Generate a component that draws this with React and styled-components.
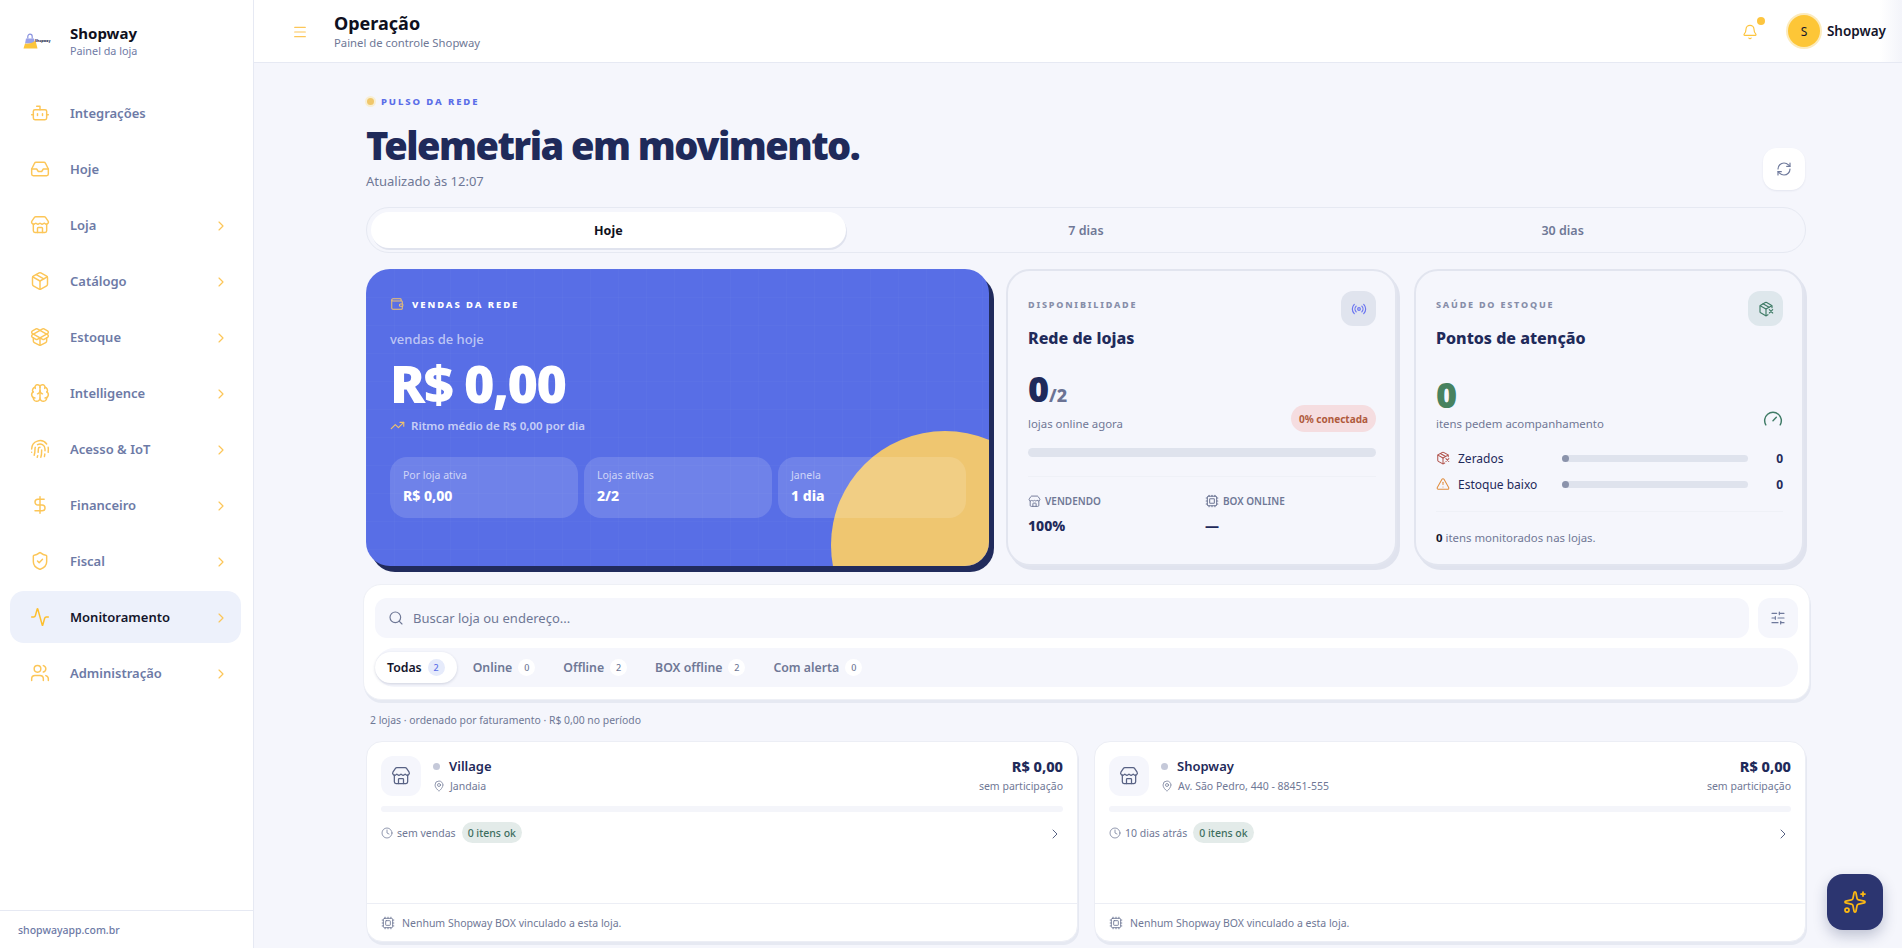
import styled, { createGlobalStyle } from "styled-components";
import {
  Activity,
  Bell,
  Bot,
  Brain,
  ChevronRight,
  Clock,
  Cpu,
  DollarSign,
  Fingerprint,
  Gauge,
  Inbox,
  MapPin,
  Menu,
  Package,
  PackageOpen,
  PackageX,
  Radio,
  RefreshCw,
  Search,
  ShieldCheck,
  SlidersHorizontal,
  Sparkles,
  Store,
  TrendingUp,
  TriangleAlert,
  Users,
  Wallet,
} from "lucide-react";

const NAV = [
  { label: "Integrações", icon: Bot },
  { label: "Hoje", icon: Inbox },
  { label: "Loja", icon: Store, more: true },
  { label: "Catálogo", icon: Package, more: true },
  { label: "Estoque", icon: PackageOpen, more: true },
  { label: "Intelligence", icon: Brain, more: true },
  { label: "Acesso & IoT", icon: Fingerprint, more: true },
  { label: "Financeiro", icon: DollarSign, more: true },
  { label: "Fiscal", icon: ShieldCheck, more: true },
  { label: "Monitoramento", icon: Activity, more: true, active: true },
  { label: "Administração", icon: Users, more: true },
];

const FILTERS = [
  { label: "Todas", count: 2, active: true },
  { label: "Online", count: 0 },
  { label: "Offline", count: 2 },
  { label: "BOX offline", count: 2 },
  { label: "Com alerta", count: 0 },
];

const STORES = [
  { name: "Village", place: "Jandaia", last: "sem vendas" },
  { name: "Shopway", place: "Av. São Pedro, 440 - 88451-555", last: "10 dias atrás" },
];

const Logo = () => (
  <svg width="30" height="18" viewBox="0 0 30 18">
    <path d="M3 6.5h8l1 5H2z" fill="#9aa2e8" />
    <path d="M4.8 6.5V4.4a2.2 2.2 0 0 1 4.4 0v2.1" fill="none" stroke="#8a93df" strokeWidth="1.2" />
    <path d="M0.5 16.5 2 11.5c3 .6 7-.2 10.5-3l2 8z" fill="#fcc53a" />
    <text x="12" y="10" fontFamily="'Noto Sans', sans-serif" fontSize="3.4" fontWeight="800" fill="#20264d">
      Shopway
    </text>
  </svg>
);

const App = () => {
  return (
    <Shell>
      <GlobalStyle />
      <Sidebar>
        <Brand>
          <BrandLogo>
            <Logo />
          </BrandLogo>
          <div>
            <BrandName>Shopway</BrandName>
            <BrandSub>Painel da loja</BrandSub>
          </div>
        </Brand>
        <Nav>
          {NAV.map((item) => (
            <NavItem key={item.label} $active={item.active}>
              <NavIcon $active={item.active}>
                <item.icon size={20} strokeWidth={1.75} />
              </NavIcon>
              <NavLabel>{item.label}</NavLabel>
              {item.more && (
                <NavArrow>
                  <ChevronRight size={16} strokeWidth={1.75} />
                </NavArrow>
              )}
            </NavItem>
          ))}
        </Nav>
        <SideFoot>shopwayapp.com.br</SideFoot>
      </Sidebar>

      <Main>
        <Topbar>
          <MenuButton>
            <Menu size={16} strokeWidth={1.75} />
          </MenuButton>
          <TopTitles>
            <TopTitle>Operação</TopTitle>
            <TopSub>Painel de controle Shopway</TopSub>
          </TopTitles>
          <BellWrap>
            <Bell size={16} strokeWidth={1.75} />
            <BellDot />
          </BellWrap>
          <Avatar>S</Avatar>
          <UserName>Shopway</UserName>
        </Topbar>

        <Content>
          <Eyebrow>
            <PulseDot />
            PULSO DA REDE
          </Eyebrow>
          <HeadRow>
            <div>
              <Headline>Telemetria em movimento.</Headline>
              <Updated>Atualizado às 12:07</Updated>
            </div>
            <RefreshButton>
              <RefreshCw size={16} strokeWidth={1.75} />
            </RefreshButton>
          </HeadRow>

          <Period>
            <PeriodTab $active>Hoje</PeriodTab>
            <PeriodTab>7 dias</PeriodTab>
            <PeriodTab>30 dias</PeriodTab>
          </Period>

          <Hero>
            <SalesCard>
              <SalesCircle />
              <SalesTag>
                <Wallet size={14} strokeWidth={1.75} color="#f1c36c" />
                VENDAS DA REDE
              </SalesTag>
              <SalesCaption>vendas de hoje</SalesCaption>
              <SalesValue>R$ 0,00</SalesValue>
              <SalesPace>
                <TrendingUp size={15} strokeWidth={1.75} color="#f1c36c" />
                Ritmo médio de R$ 0,00 por dia
              </SalesPace>
              <SalesStats>
                <SalesStat>
                  <StatLabel>Por loja ativa</StatLabel>
                  <StatValue>R$ 0,00</StatValue>
                </SalesStat>
                <SalesStat>
                  <StatLabel>Lojas ativas</StatLabel>
                  <StatValue>2/2</StatValue>
                </SalesStat>
                <SalesStat>
                  <StatLabel>Janela</StatLabel>
                  <StatValue>1 dia</StatValue>
                </SalesStat>
              </SalesStats>
            </SalesCard>

            <InfoCard>
              <CardHead>
                <div>
                  <CardTag>DISPONIBILIDADE</CardTag>
                  <CardTitle>Rede de lojas</CardTitle>
                </div>
                <CardIcon $bg="#e0e4ee" $color="#6a74f0">
                  <Radio size={16} strokeWidth={1.75} />
                </CardIcon>
              </CardHead>
              <BigRow>
                <div>
                  <BigNumber>
                    0<BigTotal>/2</BigTotal>
                  </BigNumber>
                  <BigCaption>lojas online agora</BigCaption>
                </div>
                <Badge>0% conectada</Badge>
              </BigRow>
              <Track />
              <Divider $top={19} />
              <Pair>
                <div>
                  <PairLabel>
                    <Store size={13} strokeWidth={1.75} />
                    VENDENDO
                  </PairLabel>
                  <PairValue>100%</PairValue>
                </div>
                <div>
                  <PairLabel>
                    <Cpu size={14} strokeWidth={1.75} />
                    BOX ONLINE
                  </PairLabel>
                  <PairValue>—</PairValue>
                </div>
              </Pair>
            </InfoCard>

            <InfoCard>
              <CardHead>
                <div>
                  <CardTag>SAÚDE DO ESTOQUE</CardTag>
                  <CardTitle>Pontos de atenção</CardTitle>
                </div>
                <CardIcon $bg="#dee7ec" $color="#3f7b66">
                  <PackageX size={16} strokeWidth={1.75} />
                </CardIcon>
              </CardHead>
              <BigRow>
                <div>
                  <BigNumber $green>0</BigNumber>
                  <BigCaption>itens pedem acompanhamento</BigCaption>
                </div>
                <GaugeMark>
                  <Gauge size={20} strokeWidth={1.75} />
                </GaugeMark>
              </BigRow>
              <Levels>
                <Level>
                  <LevelName>
                    <PackageX size={14} strokeWidth={1.75} color="#b0524a" />
                    Zerados
                  </LevelName>
                  <LevelTrack>
                    <LevelDot />
                  </LevelTrack>
                  <LevelCount>0</LevelCount>
                </Level>
                <Level>
                  <LevelName>
                    <TriangleAlert size={14} strokeWidth={1.75} color="#e08d3c" />
                    Estoque baixo
                  </LevelName>
                  <LevelTrack>
                    <LevelDot />
                  </LevelTrack>
                  <LevelCount>0</LevelCount>
                </Level>
              </Levels>
              <Divider $top={18} />
              <Monitored>
                <strong>0</strong> itens monitorados nas lojas.
              </Monitored>
            </InfoCard>
          </Hero>

          <FilterPanel>
            <SearchRow>
              <SearchBox>
                <Search size={16} strokeWidth={1.75} />
                Buscar loja ou endereço...
              </SearchBox>
              <FilterButton>
                <SlidersHorizontal size={16} strokeWidth={1.75} />
              </FilterButton>
            </SearchRow>
            <Pills>
              {FILTERS.map((f) => (
                <Pill key={f.label} $active={f.active}>
                  {f.label}
                  <PillCount $active={f.active}>{f.count}</PillCount>
                </Pill>
              ))}
            </Pills>
          </FilterPanel>

          <ListInfo>2 lojas · ordenado por faturamento · R$ 0,00 no período</ListInfo>

          <StoreGrid>
            {STORES.map((s) => (
              <StoreCard key={s.name}>
                <StoreBody>
                  <StoreTop>
                    <StoreIcon>
                      <Store size={20} strokeWidth={1.5} />
                    </StoreIcon>
                    <StoreInfo>
                      <StoreName>
                        <StoreDot />
                        {s.name}
                      </StoreName>
                      <StorePlace>
                        <MapPin size={12} strokeWidth={1.5} />
                        {s.place}
                      </StorePlace>
                    </StoreInfo>
                    <StoreMoney>
                      <MoneyValue>R$ 0,00</MoneyValue>
                      <MoneyShare>sem participação</MoneyShare>
                    </StoreMoney>
                  </StoreTop>
                  <StoreTrack />
                  <StoreMeta>
                    <StoreLast>
                      <Clock size={12} strokeWidth={1.5} />
                      {s.last}
                    </StoreLast>
                    <OkPill>0 itens ok</OkPill>
                    <StoreArrow>
                      <ChevronRight size={16} strokeWidth={1.5} />
                    </StoreArrow>
                  </StoreMeta>
                </StoreBody>
                <StoreFoot>
                  <Cpu size={14} strokeWidth={1.5} />
                  Nenhum Shopway BOX vinculado a esta loja.
                </StoreFoot>
              </StoreCard>
            ))}
          </StoreGrid>
        </Content>
      </Main>

      <Fab>
        <Sparkles size={24} strokeWidth={1.75} />
      </Fab>
    </Shell>
  );
};

export default App;

const GlobalStyle = createGlobalStyle`
  * { box-sizing: border-box; }
  html, body { margin: 0; height: 100%; overflow: hidden; }
  body {
    font-family: "Noto Sans", Inter, sans-serif;
    background: #f5f6fc;
    color: #1f2a5a;
  }
  strong { font-weight: 700; }
`;

const Shell = styled.div`
  display: flex;
  height: 948px;
  overflow: hidden;
`;

const Sidebar = styled.aside`
  width: 254px;
  flex: none;
  display: flex;
  flex-direction: column;
  background: #fff;
  border-right: 1px solid #e6e9f3;
`;
const Brand = styled.div`
  height: 81px;
  flex: none;
  display: flex;
  align-items: center;
  gap: 17px;
  padding: 0 0 0 23px;
`;
const BrandLogo = styled.div`
  width: 30px;
  height: 18px;
`;
const BrandName = styled.div`
  font-size: 15px;
  line-height: 20px;
  font-weight: 700;
  color: #0f1020;
`;
const BrandSub = styled.div`
  font-size: 10.8px;
  line-height: 16px;
  color: #6f7ba6;
`;
const Nav = styled.nav`
  flex: 1;
  display: flex;
  flex-direction: column;
  gap: 4px;
  padding: 6px 12px 0 10px;
`;
const NavItem = styled.div`
  height: 52px;
  display: flex;
  align-items: center;
  padding: 0 12px 0 20px;
  border-radius: 14px;
  background: ${(p) => (p.$active ? "#edf1fb" : "transparent")};
  color: ${(p) => (p.$active ? "#14152b" : "#6d7aa6")};
`;
const NavIcon = styled.span`
  width: 20px;
  height: 20px;
  margin-right: 20px;
  color: ${(p) => (p.$active ? "#fdbf2d" : "#fcc658")};
`;
const NavLabel = styled.span`
  flex: 1;
  font-size: 13px;
  font-weight: 600;
`;
const NavArrow = styled.span`
  height: 16px;
  color: #fcc658;
`;
const SideFoot = styled.div`
  height: 38px;
  flex: none;
  display: flex;
  align-items: center;
  padding-left: 18px;
  border-top: 1px solid #e6e9f3;
  font-size: 10.5px;
  font-weight: 500;
  color: #6d7aa6;
`;

const Main = styled.main`
  flex: 1;
  min-width: 0;
  display: flex;
  flex-direction: column;
`;
const Topbar = styled.header`
  height: 63px;
  flex: none;
  display: flex;
  align-items: center;
  padding: 0 16px 0 38px;
  background: linear-gradient(90deg, #fff calc(100% - 22px), #f3f4fa);
  border-bottom: 1px solid #e6e9f3;
`;
const MenuButton = styled.span`
  height: 16px;
  margin-right: 26px;
  color: #fcc658;
`;
const TopTitles = styled.div`
  flex: 1;
`;
const TopTitle = styled.div`
  font-size: 18px;
  line-height: 24px;
  font-weight: 700;
  color: #0f1020;
`;
const TopSub = styled.div`
  font-size: 11.3px;
  line-height: 16px;
  color: #6f7896;
`;
const BellWrap = styled.span`
  position: relative;
  height: 16px;
  margin-right: 30px;
  color: #fdc53f;
`;
const BellDot = styled.span`
  position: absolute;
  top: -6px;
  right: -7px;
  width: 8px;
  height: 8px;
  border-radius: 50%;
  background: #fdc53f;
`;
const Avatar = styled.span`
  width: 32px;
  height: 32px;
  display: flex;
  align-items: center;
  justify-content: center;
  margin-right: 7px;
  border-radius: 50%;
  background: #fdc637;
  box-shadow: 0 0 0 2px #fcebbd;
  font-size: 12px;
  color: #14152b;
`;
const UserName = styled.span`
  font-size: 13.5px;
  font-weight: 600;
  color: #14152b;
`;

const Content = styled.div`
  padding: 30px 96px 0 112px;
`;
const Eyebrow = styled.div`
  display: flex;
  align-items: center;
  gap: 7px;
  height: 16px;
  font-size: 9.5px;
  font-weight: 800;
  letter-spacing: 0.2em;
  color: #5b6ee8;
`;
const PulseDot = styled.span`
  width: 7px;
  height: 7px;
  margin-left: 1px;
  border-radius: 50%;
  background: #f0c76b;
  box-shadow: 0 0 0 2px #f8eed2;
`;
const HeadRow = styled.div`
  display: flex;
  align-items: flex-end;
  justify-content: space-between;
  margin-top: 12px;
`;
const Headline = styled.h1`
  margin: 0;
  font-size: 38px;
  line-height: 48px;
  font-weight: 900;
  letter-spacing: -0.04em;
  color: #1f2a5a;
`;
const Updated = styled.div`
  margin-top: 3px;
  font-size: 13px;
  line-height: 18px;
  color: #6f7896;
`;
const RefreshButton = styled.span`
  width: 42px;
  height: 42px;
  display: flex;
  align-items: center;
  justify-content: center;
  margin: 0 1px 0 0;
  border-radius: 14px;
  background: #fff;
  box-shadow: 0 1px 2px rgba(31, 42, 90, 0.08);
  color: #6f7a9c;
`;
const Period = styled.div`
  display: grid;
  grid-template-columns: repeat(3, 1fr);
  height: 46px;
  margin-top: 17px;
  padding: 4px;
  border-radius: 23px;
  border: 1px solid #e6e9f2;
`;
const PeriodTab = styled.div`
  display: flex;
  align-items: center;
  justify-content: center;
  margin-right: ${(p) => (p.$active ? "2px" : "0")};
  border-radius: 18px;
  font-size: 12.5px;
  font-weight: ${(p) => (p.$active ? 700 : 600)};
  color: ${(p) => (p.$active ? "#0f1020" : "#6f7896")};
  background: ${(p) => (p.$active ? "#fff" : "transparent")};
  box-shadow: ${(p) => (p.$active ? "1px 2px 0 #e0e3ee" : "none")};
`;

const Hero = styled.section`
  display: grid;
  grid-template-columns: 623px 391px 390px;
  column-gap: 17px;
  height: 297px;
  margin-top: 16px;
`;
const SalesCard = styled.article`
  position: relative;
  overflow: hidden;
  padding: 26px 23px 0 24px;
  border-radius: 24px;
  background-color: #586ee6;
  background-image: linear-gradient(rgba(255, 255, 255, 0.02) 1px, transparent 1px),
    linear-gradient(90deg, rgba(255, 255, 255, 0.02) 1px, transparent 1px);
  background-size: 28px 28px;
  box-shadow: 5px 6px 0 #212b5c;
`;
const SalesCircle = styled.span`
  position: absolute;
  left: 465px;
  top: 162px;
  width: 228px;
  height: 228px;
  border-radius: 50%;
  background: #efc670;
`;
const SalesTag = styled.div`
  position: relative;
  display: flex;
  align-items: center;
  gap: 8px;
  height: 18px;
  font-size: 9.5px;
  font-weight: 800;
  letter-spacing: 0.2em;
  color: #fff;
`;
const SalesCaption = styled.div`
  margin-top: 17px;
  font-size: 13px;
  line-height: 18px;
  font-weight: 500;
  color: rgba(255, 255, 255, 0.62);
`;
const SalesValue = styled.div`
  margin-top: 5px;
  font-size: 52px;
  line-height: 60px;
  font-weight: 900;
  letter-spacing: -0.03em;
  color: #fff;
`;
const SalesPace = styled.div`
  display: flex;
  align-items: center;
  gap: 6px;
  margin-top: 3px;
  height: 18px;
  font-size: 11.5px;
  font-weight: 600;
  color: rgba(255, 255, 255, 0.68);
`;
const SalesStats = styled.div`
  position: relative;
  display: grid;
  grid-template-columns: repeat(3, 1fr);
  gap: 6px;
  margin-top: 23px;
`;
const SalesStat = styled.div`
  height: 61px;
  padding: 11px 13px;
  border-radius: 17px;
  background: rgba(255, 255, 255, 0.14);
`;
const StatLabel = styled.div`
  font-size: 10.5px;
  line-height: 14px;
  color: rgba(255, 255, 255, 0.68);
`;
const StatValue = styled.div`
  margin-top: 4px;
  font-size: 14px;
  line-height: 20px;
  font-weight: 800;
  color: #fff;
`;

const InfoCard = styled.article`
  padding: 20px 19px 0 20px;
  border-radius: 24px;
  border: 2px solid #e2e5ef;
  background: #f5f6fc;
  box-shadow: 3px 4px 0 #e0e3ee;
`;
const CardHead = styled.div`
  display: flex;
  justify-content: space-between;
  height: 60px;
`;
const CardTag = styled.div`
  margin-top: 7px;
  font-size: 9px;
  line-height: 14px;
  font-weight: 800;
  letter-spacing: 0.2em;
  color: #878ea9;
`;
const CardTitle = styled.div`
  margin-top: 15px;
  font-size: 16px;
  line-height: 22px;
  font-weight: 800;
  color: #1f2a5a;
`;
const CardIcon = styled.span`
  width: 35px;
  height: 35px;
  display: flex;
  align-items: center;
  justify-content: center;
  border-radius: 12px;
  background: ${(p) => p.$bg};
  color: ${(p) => p.$color};
`;
const BigRow = styled.div`
  display: flex;
  align-items: flex-end;
  justify-content: space-between;
  margin-top: 20px;
  height: 62px;
`;
const BigNumber = styled.div`
  margin-bottom: 0;
  font-size: 36px;
  line-height: 40px;
  font-weight: 900;
  color: ${(p) => (p.$green ? "#47825f" : "#1f2a5a")};
`;
const BigTotal = styled.span`
  font-size: 18px;
  font-weight: 800;
  color: #6b7394;
`;
const BigCaption = styled.div`
  font-size: 11.4px;
  line-height: 18px;
  color: #717896;
`;
const Badge = styled.span`
  display: flex;
  align-items: center;
  height: 27px;
  margin-bottom: 1px;
  padding: 0 8px;
  border-radius: 14px;
  background: #f5dde0;
  font-size: 10px;
  font-weight: 700;
  color: #b05a3c;
`;
const Track = styled.div`
  height: 9px;
  margin-top: 15px;
  border-radius: 5px;
  background: #dfe3ed;
`;
const Divider = styled.div`
  height: 1px;
  margin-top: ${(p) => p.$top}px;
  background: #eff1f7;
`;
const Pair = styled.div`
  display: grid;
  grid-template-columns: 177px 1fr;
  margin-top: 15px;
`;
const PairLabel = styled.div`
  display: flex;
  align-items: center;
  gap: 4px;
  height: 18px;
  font-size: 10px;
  font-weight: 600;
  color: #6f7896;
`;
const PairValue = styled.div`
  margin-top: 6px;
  font-size: 14px;
  line-height: 20px;
  font-weight: 800;
  color: #1f2a5a;
`;
const GaugeMark = styled.span`
  height: 20px;
  margin: 0 0 4px;
  color: #3f7b66;
`;
const Levels = styled.div`
  display: flex;
  flex-direction: column;
  gap: 8px;
  margin-top: 16px;
`;
const Level = styled.div`
  display: grid;
  grid-template-columns: 126px 1fr 35px;
  align-items: center;
  height: 18px;
`;
const LevelName = styled.div`
  display: flex;
  align-items: center;
  gap: 8px;
  font-size: 12px;
  color: #1f2a5a;
`;
const LevelTrack = styled.div`
  height: 7px;
  border-radius: 4px;
  background: #dfe3ed;
`;
const LevelDot = styled.div`
  width: 7px;
  height: 7px;
  border-radius: 50%;
  background: #8b93ab;
`;
const LevelCount = styled.div`
  text-align: right;
  font-size: 12px;
  font-weight: 700;
  color: #1f2a5a;
`;
const Monitored = styled.div`
  margin-top: 17px;
  font-size: 11.4px;
  line-height: 18px;
  color: #717896;
  strong {
    color: #14152b;
  }
`;

const FilterPanel = styled.section`
  width: 1447px;
  margin: 18px 0 0 -3px;
  padding: 13px 11px 12px;
  border-radius: 18px;
  border: 1px solid #eef0f6;
  background: #fff;
  box-shadow: 1px 3px 0 #e6e9f2;
`;
const SearchRow = styled.div`
  display: flex;
  gap: 9px;
`;
const SearchBox = styled.div`
  flex: 1;
  height: 40px;
  display: flex;
  align-items: center;
  gap: 9px;
  padding: 0 13px;
  border-radius: 12px;
  background: #f5f6fc;
  font-size: 13px;
  color: #6f7896;
`;
const FilterButton = styled.span`
  width: 40px;
  height: 40px;
  display: flex;
  align-items: center;
  justify-content: center;
  border-radius: 12px;
  background: #f5f6fc;
  color: #6f7a9c;
`;
const Pills = styled.div`
  display: flex;
  align-items: center;
  gap: 4px;
  height: 39px;
  margin-top: 10px;
  border-radius: 20px;
  background: #f5f6fc;
`;
const Pill = styled.div`
  display: flex;
  align-items: center;
  gap: 6px;
  height: 31px;
  padding: 0 12px;
  border-radius: 16px;
  font-size: 12.3px;
  font-weight: 600;
  color: ${(p) => (p.$active ? "#14152b" : "#6f7896")};
  background: ${(p) => (p.$active ? "#fff" : "transparent")};
  box-shadow: ${(p) => (p.$active ? "0 1px 3px rgba(31, 42, 90, 0.18)" : "none")};
`;
const PillCount = styled.span`
  min-width: 17px;
  height: 17px;
  display: flex;
  align-items: center;
  justify-content: center;
  border-radius: 9px;
  font-size: 9px;
  font-weight: 500;
  background: ${(p) => (p.$active ? "#e6ebfb" : "#fff")};
  color: ${(p) => (p.$active ? "#5b6ee8" : "#6f7896")};
`;
const ListInfo = styled.div`
  margin: 12px 0 0 4px;
  font-size: 10.4px;
  line-height: 16px;
  color: #6f7896;
`;

const StoreGrid = styled.section`
  display: grid;
  grid-template-columns: 712px 712px;
  gap: 16px;
  margin-top: 13px;
`;
const StoreCard = styled.article`
  height: 201px;
  display: flex;
  flex-direction: column;
  border-radius: 16px;
  border: 1px solid #eceef5;
  background: #fff;
  box-shadow: 1px 3px 0 #e6e9f2;
`;
const StoreBody = styled.div`
  flex: 1;
  padding: 14px 14px 0;
`;
const StoreTop = styled.div`
  display: flex;
  gap: 12px;
`;
const StoreIcon = styled.span`
  width: 40px;
  height: 40px;
  display: flex;
  align-items: center;
  justify-content: center;
  border-radius: 12px;
  background: #f5f6fc;
  color: #586284;
`;
const StoreInfo = styled.div`
  flex: 1;
`;
const StoreName = styled.div`
  display: flex;
  align-items: center;
  gap: 9px;
  height: 20px;
  font-size: 13px;
  font-weight: 600;
  color: #1f2a5a;
`;
const StoreDot = styled.span`
  width: 7px;
  height: 7px;
  border-radius: 50%;
  background: #c5c9d9;
`;
const StorePlace = styled.div`
  display: flex;
  align-items: center;
  gap: 5px;
  height: 18px;
  margin-top: 1px;
  font-size: 10.5px;
  color: #6f7896;
`;
const StoreMoney = styled.div`
  text-align: right;
`;
const MoneyValue = styled.div`
  font-size: 14.5px;
  line-height: 20px;
  font-weight: 800;
  color: #1f2a5a;
`;
const MoneyShare = styled.div`
  font-size: 10.5px;
  line-height: 16px;
  margin-top: 2px;
  color: #6f7896;
`;
const StoreTrack = styled.div`
  height: 6px;
  margin-top: 10px;
  border-radius: 3px;
  background: #f4f5fa;
`;
const StoreMeta = styled.div`
  display: flex;
  align-items: center;
  gap: 6px;
  height: 21px;
  margin-top: 10px;
`;
const StoreLast = styled.span`
  display: flex;
  align-items: center;
  gap: 4px;
  font-size: 10.5px;
  color: #6f7896;
`;
const OkPill = styled.span`
  display: flex;
  align-items: center;
  height: 21px;
  padding: 0 6px;
  border-radius: 11px;
  background: #e3ebe9;
  font-size: 10.5px;
  font-weight: 500;
  color: #3e6e5f;
`;
const StoreArrow = styled.span`
  height: 16px;
  margin: 0 0 0 auto;
  color: #586284;
`;
const StoreFoot = styled.div`
  height: 38px;
  display: flex;
  align-items: center;
  gap: 7px;
  padding: 0 14px;
  border-top: 1px solid #eceef5;
  font-size: 10.5px;
  color: #6f7896;
`;
const Fab = styled.span`
  position: fixed;
  right: 19px;
  bottom: 18px;
  width: 56px;
  height: 56px;
  display: flex;
  align-items: center;
  justify-content: center;
  border-radius: 16px;
  background: #2c3570;
  box-shadow: 0 6px 14px rgba(31, 42, 90, 0.25);
  color: #fdb913;
`;
